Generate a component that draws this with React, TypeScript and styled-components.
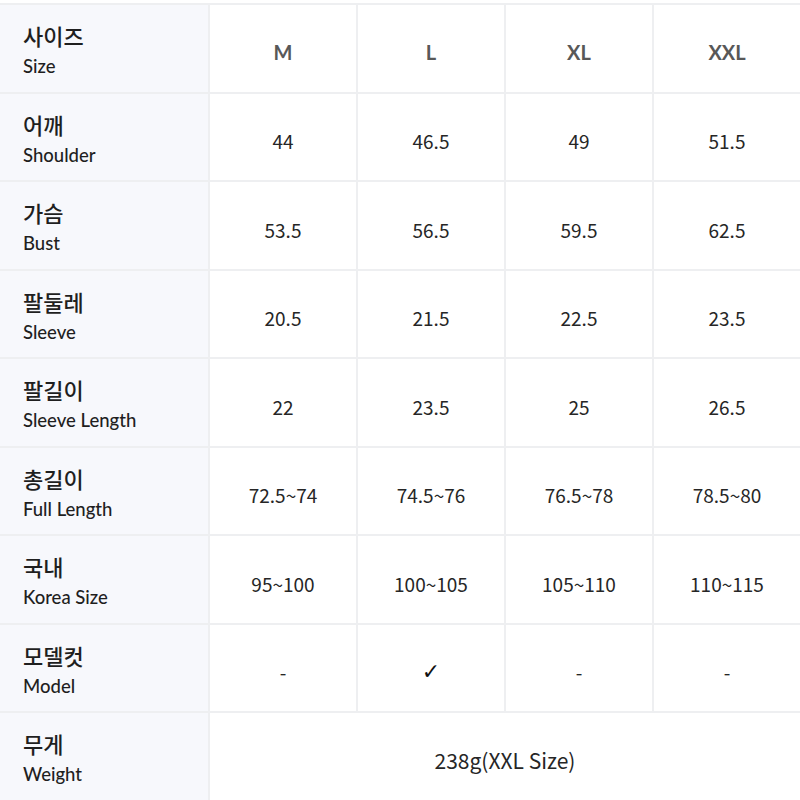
import React from "react";
import styled, { createGlobalStyle } from "styled-components";

type RowT = {
    ko: string;
    en: string;
    values: string[];
};

const sizes = ["M", "L", "XL", "XXL"];

const rows: RowT[] = [
    { ko: "어깨", en: "Shoulder", values: ["44", "46.5", "49", "51.5"] },
    { ko: "가슴", en: "Bust", values: ["53.5", "56.5", "59.5", "62.5"] },
    { ko: "팔둘레", en: "Sleeve", values: ["20.5", "21.5", "22.5", "23.5"] },
    { ko: "팔길이", en: "Sleeve Length", values: ["22", "23.5", "25", "26.5"] },
    { ko: "총길이", en: "Full Length", values: ["72.5~74", "74.5~76", "76.5~78", "78.5~80"] },
    { ko: "국내", en: "Korea Size", values: ["95~100", "100~105", "105~110", "110~115"] },
    { ko: "모델컷", en: "Model", values: ["-", "✓", "-", "-"] },
];

export default function App() {
    return (
        <>
            <GlobalStyle />
            <Table>
                <LabelCell>
                    <Ko>사이즈</Ko>
                    <En>Size</En>
                </LabelCell>
                {sizes.map((s) => (
                    <HeadCell key={s}>{s}</HeadCell>
                ))}

                {rows.map((r) => (
                    <React.Fragment key={r.en}>
                        <LabelCell>
                            <Ko>{r.ko}</Ko>
                            <En>{r.en}</En>
                        </LabelCell>
                        {r.values.map((v, i) =>
                            v === "✓" ? (
                                <ValueCell key={i}>
                                    <Check>✓</Check>
                                </ValueCell>
                            ) : (
                                <ValueCell key={i}>{v}</ValueCell>
                            )
                        )}
                    </React.Fragment>
                ))}

                <LabelCell>
                    <Ko>무게</Ko>
                    <En>Weight</En>
                </LabelCell>
                <ValueCell $span={4} $size={21}>238g(XXL Size)</ValueCell>
            </Table>
        </>
    );
}

// styles

const GlobalStyle = createGlobalStyle`
    html, body {
        margin: 0;
        padding: 0;
        background: #ffffff;
    }
    body {
        font-family: "Noto Sans CJK KR", "Noto Sans", sans-serif;
    }
`;

const Table = styled.div`
    display: grid;
    grid-template-columns: 208px repeat(4, 148px);
    grid-auto-rows: 88.5px;
    width: 800px;
    margin-top: 3px;
    border-top: 2px solid #eeeff1;
    box-sizing: border-box;
`;

const Cell = styled.div`
    border-bottom: 2px solid #eeeff1;
    border-left: 2px solid #eeeff1;
    box-sizing: border-box;
    padding-top: 8px;
`;

const LabelCell = styled(Cell)`
    display: flex;
    flex-direction: column;
    justify-content: center;
    padding-left: 23px;
    border-left: none;
    background: #f7f8fc;
    color: #1f1f1f;
`;

const Ko = styled.span`
    font-family: "Noto Sans CJK KR", sans-serif;
    font-size: 22px;
    line-height: 28px;
    font-weight: 500;
`;

const En = styled.span`
    font-family: Lato, "Noto Sans", sans-serif;
    font-size: 18.5px;
    line-height: 34px;
    font-weight: 500;
`;

const HeadCell = styled(Cell)`
    display: flex;
    align-items: center;
    justify-content: center;
    font-family: Lato, sans-serif;
    font-weight: 700;
    font-size: 20px;
    color: #585858;
`;

const ValueCell = styled(Cell)<{ $span?: number; $size?: number }>`
    display: flex;
    align-items: center;
    justify-content: center;
    grid-column: ${(p) => (p.$span ? `span ${p.$span}` : "auto")};
    font-family: "Noto Sans CJK KR", sans-serif;
    font-size: ${(p) => p.$size ?? 19}px;
    color: #262626;
`;

const Check = styled.span`
    font-family: "DejaVu Sans", sans-serif;
    font-size: 22px;
    font-weight: 700;
    color: #111111;
`;
